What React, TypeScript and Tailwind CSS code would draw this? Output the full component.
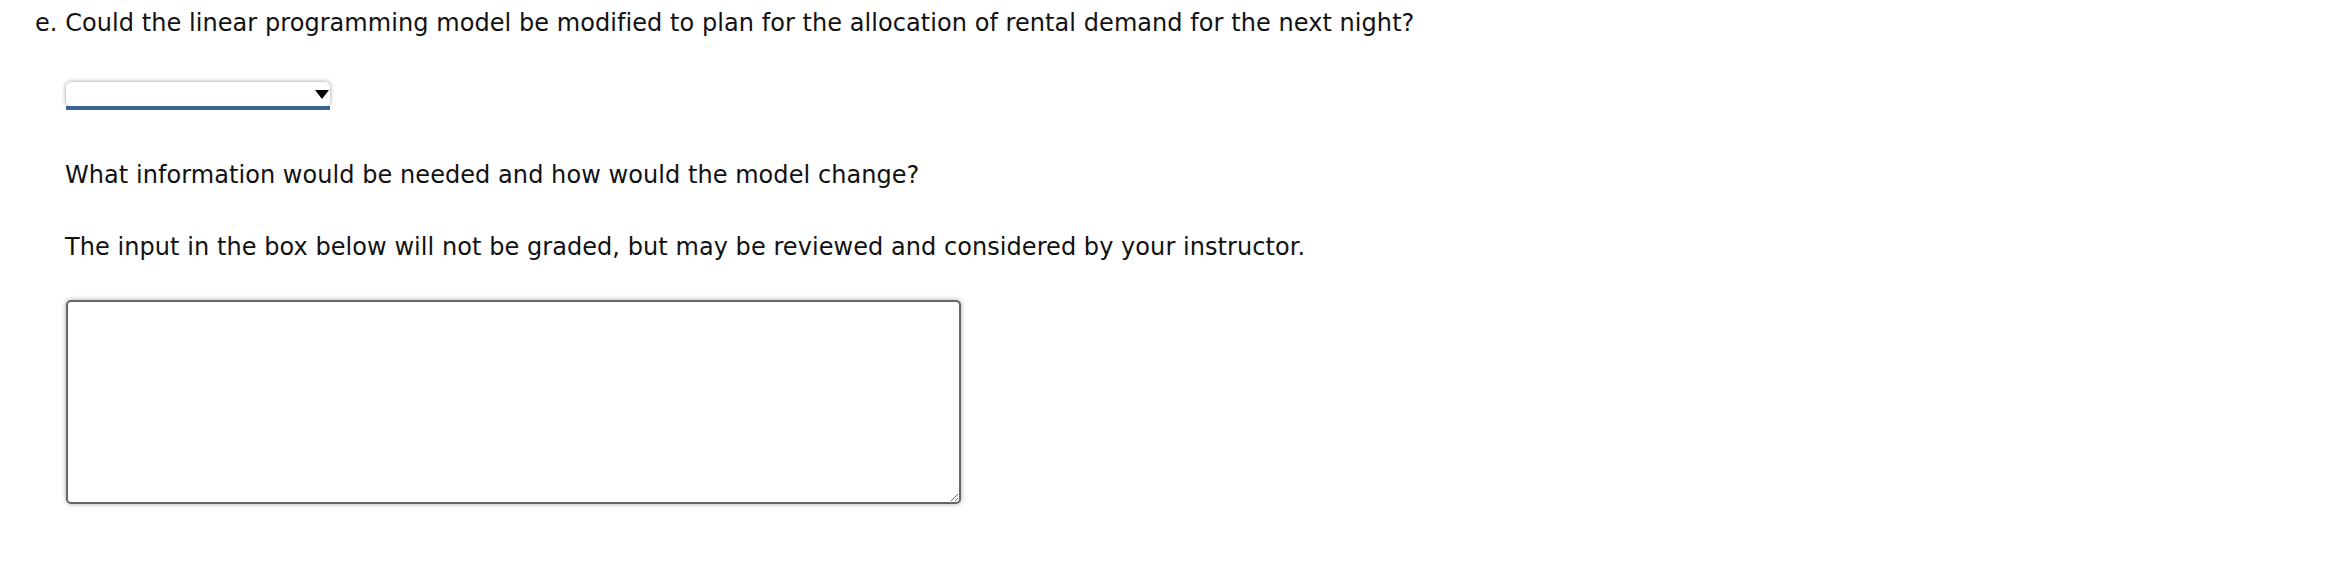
export default function App() {
  return (
    <div
      className="min-h-[570px] bg-white pl-[35px] pt-[5px] text-[24px] leading-[36px] tracking-[0.06px] text-[#111]"
      style={{ fontFamily: '"DejaVu Sans", Verdana, sans-serif' }}
    >
      <p>e. Could the linear programming model be modified to plan for the allocation of rental demand for the next night?</p>

      <div className="ml-[31px] mt-[41px] w-[264px]">
        <div className="flex h-[24px] items-center justify-end rounded-[5px] bg-white pr-[1px] shadow-[0_0_5px_rgba(0,0,0,0.4)]">
          <svg width="14" height="9" viewBox="0 0 14 9">
            <path d="M0 0 H14 L7 9 Z" fill="#000" />
          </svg>
        </div>
        <div className="h-[4px] bg-[#3b6590]" />
      </div>

      <p className="ml-[30px] mt-[47px]">What information would be needed and how would the model change?</p>

      <p className="ml-[30px] mt-[36px]">
        The input in the box below will not be graded, but may be reviewed and considered by your instructor.
      </p>

      <textarea
        aria-label="response"
        className="mt-[35px] ml-[31px] block h-[204px] w-[895px] rounded-[5px] border-[2.5px] border-[#666] bg-white shadow-[0_0_5px_rgba(0,0,0,0.35)] outline-none"
      />
    </div>
  );
}
